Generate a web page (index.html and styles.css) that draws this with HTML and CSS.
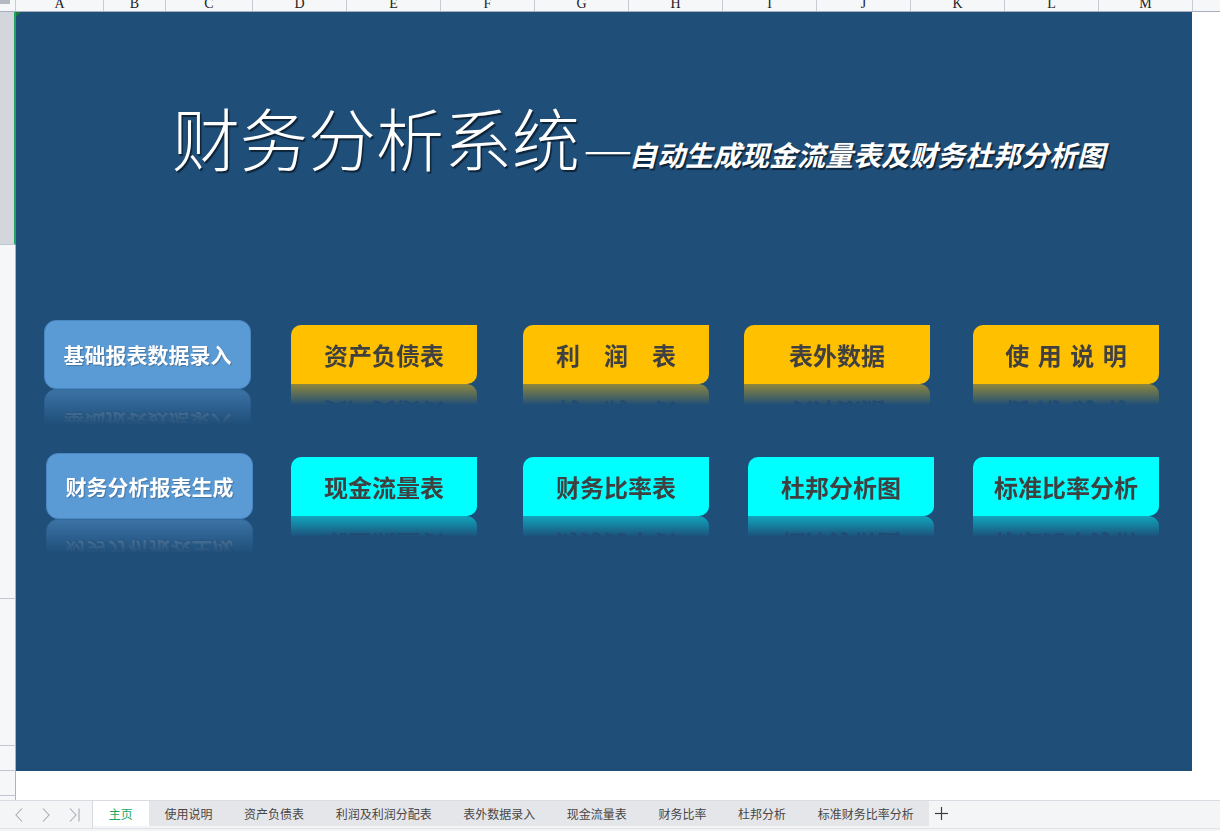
FILE: index.html
```html
<!DOCTYPE html>
<html lang="zh-CN">
<head>
<meta charset="utf-8">
<title>财务分析系统</title>
<link rel="stylesheet" href="styles.css">
</head>
<body>
<div class="app">
  <div class="colhead">
    <div class="corner"><span class="corner-tri"></span></div>
    <div class="col">A</div><div class="col">B</div><div class="col">C</div><div class="col">D</div>
    <div class="col">E</div><div class="col">F</div><div class="col">G</div><div class="col">H</div>
    <div class="col">I</div><div class="col">J</div><div class="col">K</div><div class="col">L</div>
    <div class="col">M</div><div class="col rest"></div>
  </div>

  <div class="main">
    <div class="rowhead">
      <div class="seg sel"></div>
      <div class="seg h354"></div>
      <div class="seg h147"></div>
      <div class="seg h25"></div>
      <div class="seg h25"></div>
      <div class="seg last"></div>
    </div>
    <div class="sheet">
      <div class="canvas-row">
        <div class="canvas">
          <h1 class="title"><span class="title-main">财务分析系统</span><span class="dash">—</span><span class="title-sub">自动生成现金流量表及财务杜邦分析图</span></h1>
          <div class="buttons">
            <div class="btn btn-blue">基础报表数据录入</div>
            <div class="btn btn-yellow">资产负债表</div>
            <div class="btn btn-yellow">利　润　表</div>
            <div class="btn btn-yellow">表外数据</div>
            <div class="btn btn-yellow spaced">使 用 说 明</div>

            <div class="btn btn-blue short">财务分析报表生成</div>
            <div class="btn btn-cyan">现金流量表</div>
            <div class="btn btn-cyan">财务比率表</div>
            <div class="btn btn-cyan nudge">杜邦分析图</div>
            <div class="btn btn-cyan">标准比率分析</div>
          </div>
        </div>
        <div class="blank"></div>
      </div>
      <div class="white-row"></div>
    </div>
  </div>

  <div class="tabbar">
    <div class="nav">
      <svg class="nav-ico" width="8" height="14" viewBox="0 0 8 14"><polyline points="7,0.5 1,7 7,13.5" fill="none" stroke="#a7abb4" stroke-width="1.1"/></svg>
      <svg class="nav-ico" width="8" height="14" viewBox="0 0 8 14"><polyline points="1,0.5 7,7 1,13.5" fill="none" stroke="#a7abb4" stroke-width="1.1"/></svg>
      <svg class="nav-ico" width="11" height="14" viewBox="0 0 11 14"><polyline points="1,0.5 7,7 1,13.5" fill="none" stroke="#a7abb4" stroke-width="1.1"/><line x1="10" y1="0.5" x2="10" y2="13.5" stroke="#a7abb4" stroke-width="1.1"/></svg>
    </div>
    <div class="tabs">
      <div class="tab active">主页</div>
      <div class="tab">使用说明</div>
      <div class="tab">资产负债表</div>
      <div class="tab">利润及利润分配表</div>
      <div class="tab">表外数据录入</div>
      <div class="tab">现金流量表</div>
      <div class="tab">财务比率</div>
      <div class="tab">杜邦分析</div>
      <div class="tab">标准财务比率分析</div>
    </div>
    <div class="add">
      <svg width="13" height="13" viewBox="0 0 13 13"><line x1="6.5" y1="0" x2="6.5" y2="13" stroke="#3c3c3c" stroke-width="1.2"/><line x1="0" y1="6.5" x2="13" y2="6.5" stroke="#3c3c3c" stroke-width="1.2"/></svg>
    </div>
  </div>
  <div class="foot"></div>
</div>
</body>
</html>
```

FILE: styles.css
```css
html, body {
  margin: 0;
  padding: 0;
}
body {
  width: 1220px;
  height: 831px;
  overflow: hidden;
  background: #ffffff;
  font-family: "Noto Sans CJK SC", "Noto Sans", sans-serif;
}
.app {
  width: 1220px;
  height: 831px;
  display: flex;
  flex-direction: column;
}

/* column header */
.colhead {
  display: grid;
  grid-template-columns: 16px 88px 62px 87px repeat(10, 94px) 1fr;
  height: 11px;
  border-bottom: 1px solid #a7afbf;
  background: #f6f7f9;
  overflow: hidden;
  flex: none;
}
.col {
  box-sizing: border-box;
  border-right: 1px solid #c7cbd4;
  text-align: center;
  font-family: "Liberation Serif", serif;
  font-size: 14px;
  line-height: 7px;
  color: #222;
}
.col.rest {
  border-right: none;
}
.corner {
  box-sizing: border-box;
  border-right: 1px solid #c7cbd4;
  position: relative;
}
.corner-tri {
  position: absolute;
  left: 0;
  top: 0;
  width: 10px;
  height: 4px;
  background: #b4b8c0;
}

/* main area */
.main {
  display: grid;
  grid-template-columns: 16px 1fr;
  height: 788px;
  flex: none;
}
.rowhead {
  display: flex;
  flex-direction: column;
  background: #f6f7f9;
}
.seg {
  box-sizing: border-box;
  border-right: 1px solid #abb3c3;
  border-bottom: 1px solid #bfc5d1;
}
.sel {
  height: 233px;
  background: #d4d6dd;
  border-right: 2px solid #1fa463;
}
.h354 { height: 354px; }
.h147 { height: 147px; }
.h25 { height: 25px; }
.last {
  flex: 1;
  border-bottom: none;
}

.sheet {
  display: flex;
  flex-direction: column;
}
.canvas-row {
  display: flex;
  height: 759px;
}
.canvas {
  position: relative;
  width: 1176px;
  background: #1f4e79;
  padding-top: 91px;
  box-sizing: border-box;
}
.canvas::before {
  content: "";
  position: absolute;
  left: 0;
  top: 0;
  border-top: 5px solid #1e7a3c;
  border-right: 5px solid transparent;
}
.blank {
  flex: 1;
  background: #ffffff;
}
.white-row {
  flex: 1;
  background: #ffffff;
}

/* title */
.title {
  margin: 0;
  padding-left: 156px;
  height: 68px;
  font-size: 68px;
  line-height: 68px;
  font-weight: 300;
  color: #ffffff;
  white-space: nowrap;
  text-shadow: 1.5px 1.5px 1px rgba(0, 0, 0, 0.55);
}
.dash {
  font-size: 52px;
  font-weight: 400;
  margin-left: 2px;
  margin-right: -5px;
  vertical-align: -7px;
}
.title-sub {
  font-size: 28px;
  font-weight: 700;
  font-style: italic;
}

/* buttons */
.buttons {
  display: grid;
  grid-template-columns: 247px 232px 221px 229px 186px;
  grid-auto-rows: 70px;
  row-gap: 62px;
  align-items: center;
  margin: 148px 0 0 28px;
}
.btn {
  box-sizing: border-box;
  display: flex;
  align-items: center;
  justify-content: center;
  font-weight: 700;
  white-space: nowrap;
}
.btn-blue {
  width: 207px;
  height: 69px;
  background: #5b9bd5;
  border: 1px solid #4a86c0;
  border-radius: 12px;
  color: #ffffff;
  font-size: 21px;
  text-shadow: 1px 1px 1px rgba(0, 0, 0, 0.25);
  -webkit-box-reflect: below 0 linear-gradient(to bottom, transparent 48%, rgba(255, 255, 255, 0.5));
}
.btn-blue.short {
  height: 66px;
  margin-left: 2px;
}
.btn-yellow,
.btn-cyan {
  width: 186px;
  height: 59px;
  border-radius: 10px 0 10px 0;
  color: #404040;
  font-size: 24px;
  -webkit-box-reflect: below 0 linear-gradient(to bottom, transparent 64%, rgba(255, 255, 255, 0.5));
}
.btn-yellow {
  background: #ffc000;
}
.btn-cyan {
  background: #00ffff;
}
.spaced {
  word-spacing: 3px;
}
.nudge {
  margin-left: 4px;
}

/* tab bar */
.tabbar {
  display: flex;
  height: 27px;
  border-top: 1px solid #d9dce2;
  border-bottom: 1px solid #dfe2e7;
  background: #f4f5f7;
  flex: none;
}
.nav {
  box-sizing: border-box;
  width: 93px;
  border-right: 1px solid #d6d9df;
  display: flex;
  align-items: center;
  padding-left: 15px;
  gap: 19px;
}
.nav-ico {
  display: block;
}
.tabs {
  display: flex;
  height: 25px;
}
.tab {
  padding: 0 15.8px;
  height: 25px;
  line-height: 25px;
  font-size: 12px;
  color: #474747;
  background: #e5e6ea;
  white-space: nowrap;
}
.tab.active {
  background: #ffffff;
  color: #1aa863;
}
.add {
  width: 24px;
  height: 25px;
  display: flex;
  align-items: center;
  justify-content: center;
}
.add svg {
  display: block;
}
.foot {
  flex: 1;
  background: #f3f4f6;
}
```
